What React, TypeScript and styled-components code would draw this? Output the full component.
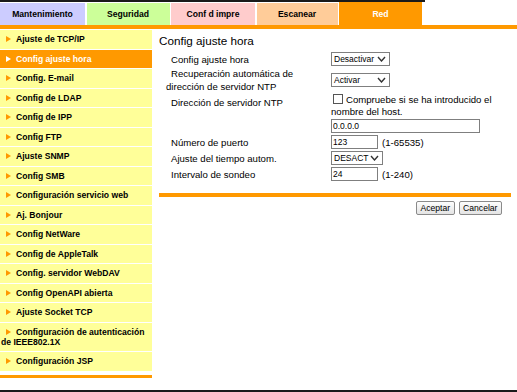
import React from "react";
import styled, { createGlobalStyle } from "styled-components";

const GlobalStyle = createGlobalStyle`
  html, body {
    margin: 0;
    padding: 0;
    background: #fff;
  }
  body {
    font-family: "Liberation Sans", Arial, sans-serif;
    color: #000;
  }
`;

const ORANGE = "#ff9900";

const tabs = [
  { label: "Mantenimiento", bg: "#ccccff", w: 85 },
  { label: "Seguridad", bg: "#ccff99", w: 83 },
  { label: "Conf d impre", bg: "#ffcccc", w: 84 },
  { label: "Escanear", bg: "#ffcc99", w: 81 },
  { label: "Red", bg: ORANGE, w: 83, active: true },
];

const menu = [
  "Ajuste de TCP/IP",
  "Config ajuste hora",
  "Config. E-mail",
  "Config de LDAP",
  "Config de IPP",
  "Config FTP",
  "Ajuste SNMP",
  "Config SMB",
  "Configuración servicio web",
  "Aj. Bonjour",
  "Config NetWare",
  "Config de AppleTalk",
  "Config. servidor WebDAV",
  "Config OpenAPI abierta",
  "Ajuste Socket TCP",
  "Configuración de autenticación de IEEE802.1X",
  "Configuración JSP",
];

export default function App() {
  return (
    <>
      <GlobalStyle />
      <Page>
        <TabBar>
          {tabs.map((t) => (
            <Tab key={t.label} $bg={t.bg} $w={t.w} $active={!!t.active}>
              {t.label}
            </Tab>
          ))}
        </TabBar>
        <OrangeBar />
        <Body>
          <Sidebar>
            {menu.map((m, i) => (
              <MenuItem key={m} $active={i === 1}>
                <Arrow $active={i === 1} />
                {m}
              </MenuItem>
            ))}
            <SideFooter />
          </Sidebar>

          <Main>
            <Title>Config ajuste hora</Title>
            <Form>
              <Row>
                <Label>Config ajuste hora</Label>
                <FakeSelect $w={59}>Desactivar</FakeSelect>
              </Row>
              <Row $h={26}>
                <Label>
                  Recuperación automática de
                  <br />
                  dirección de servidor NTP
                </Label>
                <FakeSelect $w={59}>Activar</FakeSelect>
              </Row>
              <Row $top>
                <Label $pad={3}>Dirección de servidor NTP</Label>
                <CheckText>
                  <Check type="checkbox" />
                  Compruebe si se ha introducido el nombre del host.
                </CheckText>
              </Row>
              <Row>
                <Label />
                <Field $w={149} defaultValue="0.0.0.0" />
              </Row>
              <Row>
                <Label>Número de puerto</Label>
                <Field $w={47} defaultValue="123" />
                <Hint>(1-65535)</Hint>
              </Row>
              <Row>
                <Label>Ajuste del tiempo autom.</Label>
                <FakeSelect $w={52}>DESACT</FakeSelect>
              </Row>
              <Row>
                <Label>Intervalo de sondeo</Label>
                <Field $w={47} defaultValue="24" />
                <Hint>(1-240)</Hint>
              </Row>
            </Form>
            <Separator />
            <Buttons>
              <Button>Aceptar</Button>
              <Button>Cancelar</Button>
            </Buttons>
          </Main>
        </Body>
        <PageFooter />
      </Page>
    </>
  );
}

const FakeSelect: React.FC<{ $w: number; children: React.ReactNode }> = ({
  $w,
  children,
}) => (
  <SelectBox $w={$w}>
    <span>{children}</span>
    <svg width="9" height="6" viewBox="0 0 9 6">
      <polyline
        points="1,1 4.5,5 8,1"
        fill="none"
        stroke="#333"
        strokeWidth="1.4"
      />
    </svg>
  </SelectBox>
);

const Page = styled.div`
  width: 517px;
  height: 392px;
  display: flex;
  flex-direction: column;
  overflow: hidden;
`;

const TabBar = styled.div`
  display: flex;
  align-items: flex-end;
  gap: 1.5px;
  width: 425px;
  height: 23px;
  border-top: 2px solid #1a1a1a;
`;

const Tab = styled.div<{ $bg: string; $w: number; $active: boolean }>`
  width: ${(p) => p.$w}px;
  height: ${(p) => (p.$active ? 23 : 22)}px;
  background: ${(p) => p.$bg};
  color: ${(p) => (p.$active ? "#fff" : "#000")};
  font-size: 8.6px;
  font-weight: bold;
  display: flex;
  align-items: center;
  justify-content: center;
`;

const OrangeBar = styled.div`
  height: 4px;
  background: ${ORANGE};
  margin-bottom: 1px;
`;

const Body = styled.div`
  display: flex;
  gap: 7px;
`;

const Sidebar = styled.div`
  width: 152px;
  flex-shrink: 0;
  display: flex;
  flex-direction: column;
  gap: 1px;
`;

const MenuItem = styled.div<{ $active: boolean }>`
  background: ${(p) => (p.$active ? ORANGE : "#ffff99")};
  color: ${(p) => (p.$active ? "#fff" : "#000")};
  font-size: 8.6px;
  font-weight: bold;
  line-height: 10px;
  padding: 4.25px 4px 4.25px 1px;
`;

const Arrow = styled.span<{ $active: boolean }>`
  display: inline-block;
  width: 0;
  height: 0;
  border-left: 5px solid ${(p) => (p.$active ? "#fff" : ORANGE)};
  border-top: 3.5px solid transparent;
  border-bottom: 3.5px solid transparent;
  margin: 0 5px 0 5px;
  vertical-align: 0;
`;

const SideFooter = styled.div`
  height: 3.5px;
  margin-top: 3px;
  background: ${ORANGE};
`;

const Main = styled.div`
  flex: 1;
  margin-right: 6px;
`;

const Title = styled.div`
  font-size: 11.7px;
  line-height: 14px;
  margin-top: 4px;
`;

const Form = styled.div`
  margin-top: 3px;
  display: flex;
  flex-direction: column;
`;

const Row = styled.div<{ $h?: number; $top?: boolean }>`
  display: flex;
  align-items: ${(p) => (p.$top ? "flex-start" : "center")};
  min-height: ${(p) => p.$h ?? 16}px;
`;

const Label = styled.div<{ $pad?: number }>`
  width: 172px;
  flex-shrink: 0;
  box-sizing: border-box;
  padding-left: 7px;
  padding-top: ${(p) => p.$pad ?? 0}px;
  text-indent: 5px;
  font-size: 9.6px;
  line-height: 13px;
`;

const SelectBox = styled.div<{ $w: number }>`
  width: ${(p) => p.$w}px;
  height: 14px;
  box-sizing: border-box;
  border: 1px solid #7f7f7f;
  background: #fff;
  display: flex;
  align-items: center;
  justify-content: space-between;
  padding: 0 3px 0 2px;
  font-size: 8.5px;
`;

const CheckText = styled.div`
  width: 175px;
  font-size: 9.6px;
  line-height: 12px;
  padding-top: 1px;
`;

const Check = styled.input`
  appearance: none;
  width: 10px;
  height: 10px;
  margin: 0 3px 0 2px;
  border: 1px solid #555;
  background: #fff;
  vertical-align: -1px;
`;

const Field = styled.input<{ $w: number }>`
  width: ${(p) => p.$w}px;
  height: 14px;
  box-sizing: border-box;
  border: 1px solid #7f7f7f;
  padding: 0 1px;
  margin: 0;
  font-family: "Liberation Sans", Arial, sans-serif;
  font-size: 8.5px;
  color: #000;
`;

const Hint = styled.span`
  font-size: 9.6px;
  margin-left: 4px;
`;

const Separator = styled.div`
  height: 3.5px;
  margin-top: 11px;
  background: ${ORANGE};
`;

const Buttons = styled.div`
  display: flex;
  justify-content: flex-end;
  gap: 4px;
  margin-top: 4px;
  padding-right: 9px;
`;

const Button = styled.button`
  height: 14px;
  padding: 0 3.5px;
  border: 1px solid #8a8a8a;
  border-radius: 2px;
  background: linear-gradient(#fdfdfd, #e4e4e4);
  font-family: "Liberation Sans", Arial, sans-serif;
  font-size: 8.6px;
  color: #000;
  line-height: 12px;
`;

const PageFooter = styled.div`
  margin-top: auto;
  height: 2px;
  background: #1a1a1a;
`;
